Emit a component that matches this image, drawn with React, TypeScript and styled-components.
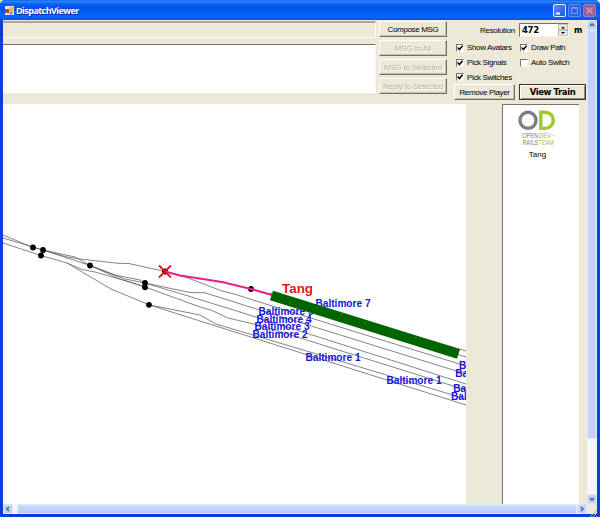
import React from "react";
import styled, { createGlobalStyle, css } from "styled-components";

const Global = createGlobalStyle`
  body { margin: 0; overflow: hidden; font-family: "Liberation Sans", Arial, sans-serif; }
  * { box-sizing: border-box; }
`;

const Window = styled.div`
  width: 600px;
  height: 517px;
  display: flex;
  flex-direction: column;
  background: #0a3fd8;
  border-radius: 5px 5px 0 0;
  overflow: hidden;
`;

const TitleBar = styled.header`
  height: 20px;
  flex: none;
  display: flex;
  align-items: center;
  padding: 1px 4px 0 5px;
  background: linear-gradient(#0a54d8 0, #2f8bff 1px, #0a62f2 4px, #0353e6 8px, #0560fa 14px, #0666ff 17px, #0351d8 20px);
`;

const Title = styled.h1`
  flex: 1;
  margin: 0 0 0 2px;
  font: bold 9px/18px "Open Sans", "Noto Sans", sans-serif;
  letter-spacing: -0.55px;
  color: #fff;
  text-shadow: 1px 1px 0 #0a2a90;
`;

const TitleButtons = styled.div`
  display: flex;
  gap: 2px;
`;

const TitleButton = styled.div<{ $kind: "min" | "max" | "close" }>`
  width: 13px;
  height: 13px;
  border-radius: 2px;
  border: 1px solid ${p => (p.$kind === "min" ? "#e4ecff" : p.$kind === "max" ? "#5f8ef0" : "#8f7fd0")};
  background: ${p => (p.$kind === "min" ? "linear-gradient(135deg,#5a90f8,#1d55e0)" : p.$kind === "max" ? "#2a62e4" : "#a0608f")};
  svg { display: block; }
`;

const Body = styled.div`
  height: 494px;
  margin: 0 3px;
  flex: none;
  display: flex;
  flex-direction: column;
  background: #ece9d8;
`;

const Main = styled.div`
  height: 484px;
  display: flex;
`;

const Form = styled.main`
  width: 584px;
  display: flex;
  flex-direction: column;
`;

const TopArea = styled.div`
  height: 84px;
  display: flex;
`;

const MessageColumn = styled.section`
  width: 373px;
  display: flex;
  flex-direction: column;
`;

const Caption = styled.div`
  height: 17px;
  margin-top: 1px;
  border-top: 2px solid #aca899;
  border-right: 1px solid #fff;
  border-bottom: 1px solid #fff;
`;

const MessageBox = styled.div`
  height: 49px;
  margin-top: 6px;
  background: #fff;
  border-top: 1px solid #77756a;
  border-right: 1px solid #f7f6f0;
`;

const ButtonColumn = styled.div`
  width: 75px;
  padding: 1px 4px 0 3px;
  display: flex;
  flex-direction: column;
  gap: 3px;
`;

const Button = styled.button<{ $strong?: boolean }>`
  display: block;
  width: 100%;
  height: 16px;
  padding: 0;
  border: 1px solid;
  border-color: #fff #716f64 #716f64 #fff;
  box-shadow: inset -1px -1px 0 #c6c2b0;
  background: #ece9d8;
  font: 8px/13px "Liberation Sans", Arial, sans-serif;
  letter-spacing: -0.35px;
  white-space: nowrap;
  color: #000;
  &:disabled {
    color: #b5b19f;
    text-shadow: 1px 1px 0 #fff;
    letter-spacing: -0.15px;
  }
  ${p => p.$strong && css`
    border-color: #333;
    box-shadow: inset 1px 1px 0 #fff, inset -1px -1px 0 #8d8a7b;
    font: bold 8.5px/13px "DejaVu Sans", sans-serif;
    letter-spacing: -0.4px;
  `}
`;

const Controls = styled.section`
  flex: 1;
  padding-left: 4px;
  display: flex;
  flex-direction: column;
`;

const ResolutionRow = styled.label`
  height: 20px;
  display: flex;
  align-items: center;
  padding-left: 25px;
  font-size: 8px;
  letter-spacing: -0.3px;
`;

const Caption2 = styled.span`
  width: 34px;
`;

const Stepper = styled.div`
  width: 50px;
  height: 14px;
  margin: 0 5px 0 5px;
  display: flex;
  justify-content: space-between;
  background: #fff;
  border: 1px solid;
  border-color: #77756a #f5f4ee #f5f4ee #77756a;
  font: bold 8.5px/13px "DejaVu Sans", sans-serif;
  padding-left: 2px;
  letter-spacing: -0.3px;
`;

const Unit = styled.span`
  font: bold 8px/13px "DejaVu Sans", sans-serif;
`;

const Checks = styled.div`
  display: grid;
  grid-template-columns: 64px 1fr;
  grid-template-rows: 15px 15px 14px;
  margin-left: 1px;
`;

const CheckLabel = styled.label`
  display: flex;
  align-items: center;
  gap: 3px;
  font-size: 8px;
  letter-spacing: -0.35px;
  white-space: nowrap;
`;

const Box = styled.span`
  width: 8px;
  height: 8px;
  background: #fff;
  border: 1px solid;
  border-color: #77756a #f5f4ee #f5f4ee #77756a;
  svg { display: block; overflow: visible; }
`;

const Actions = styled.div`
  display: grid;
  grid-template-columns: 61px 67px;
  gap: 4px;
  margin-left: -1px;
`;

const Workspace = styled.div`
  flex: 1;
  display: flex;
`;

const MapPane = styled.div`
  width: 463px;
  height: 400px;
  background: #fff;
  svg { display: block; }
`;

const Players = styled.aside`
  width: 77px;
  margin-left: 36px;
  background: #fff;
  border-top: 1px solid #77756a;
  border-left: 1px solid #77756a;
  display: flex;
  flex-direction: column;
  align-items: center;
  font-size: 8px;
  svg { display: block; margin: 3px 0 0 -8px; }
`;

const PlayerName = styled.span`
  margin: 2px 0 0 -7px;
`;

const scrollFace = css`
  background: #c3d3fb;
  border: 1px solid #dfe8ff;
  border-radius: 1px;
`;

const VScroll = styled.div`
  width: 10px;
  display: flex;
  flex-direction: column;
  background: #f5f5fa;
`;

const HScroll = styled.div`
  height: 10px;
  display: flex;
  background: #f5f5fa;
`;

const Arrow = styled.div`
  width: 10px;
  height: 10px;
  flex: none;
  ${scrollFace}
  svg { display: block; }
`;

const VThumb = styled.div`
  height: 409px;
  margin-bottom: auto;
  ${scrollFace}
`;

const HThumb = styled.div`
  flex: 1;
  margin-left: 4px;
  ${scrollFace}
  background: linear-gradient(#cbdafd, #b8cbf8);
`;

const Grip = styled.div`
  width: 10px;
  background: #ece9d8;
`;

const arrows = {
  up: "M2 5 L4 3 L6 5",
  down: "M2 3 L4 5 L6 3",
  left: "M5 2 L3 4 L5 6",
  right: "M3 2 L5 4 L3 6",
};

function ScrollArrow({ dir }: { dir: keyof typeof arrows }) {
  return (
    <Arrow>
      <svg width="8" height="8"><path d={arrows[dir]} fill="none" stroke="#4d6185" strokeWidth="1.6" /></svg>
    </Arrow>
  );
}

function Check({ children, checked = true }: { children: React.ReactNode; checked?: boolean }) {
  return (
    <CheckLabel>
      <Box>{checked && <svg width="6" height="6"><path d="M.6 2.6 L2.4 4.6 L5.6 .8" fill="none" stroke="#000" strokeWidth="1.5" /></svg>}</Box>
      {children}
    </CheckLabel>
  );
}

const tracks = [
  "3,235 33,247.5 43,250 67,257 80,259 118,263.3 129,263.5 165,271.5 188,278 222,291 234,294 272,306 466,366",
  "3,238 43,250 90,265.5 115,275 140,280 145,283 190,292.5 205,292.8 250,307 466,374",
  "3,243 41,255.5 67,263 111,289 149,304.8 200,315 216,324 330,358 466,399",
  "43,250 75,257 90,265.5 125,279 145,283 185,295 240,312 466,384",
  "67,263 82,269.5 95,272 130,282 145,287 203,308 211,310 228,318 262,326 466,390",
  "90,265.5 120,279 145,287",
  "149,304.8 200,321 466,405",
  "270,293 466,351",
  "290,303 466,357",
];

const switches = [[33, 247.5], [43, 250], [41, 255.5], [90, 265.5], [145, 283], [145, 287.3], [149, 304.8], [251, 289], [165, 271.5]];

const sidings: [string, number, number][] = [
  ["Baltimore 7", 315.5, 306.8],
  ["Baltimore 5", 258.5, 314.5],
  ["Baltimore 4", 256.5, 322.5],
  ["Baltimore 3", 254.5, 330.3],
  ["Baltimore 2", 252.5, 338.3],
  ["Baltimore 1", 305.5, 361],
  ["Baltimore 1", 386.5, 384],
  ["Baltimore 5", 459, 368.5],
  ["Baltimore 4", 455.3, 376.5],
  ["Baltimore 3", 453.3, 391.5],
  ["Baltimore 2", 451, 399.5],
];

function TrackMap() {
  return (
    <svg width="463" height="400" viewBox="3 104 463 400">
      <g fill="none" stroke="#5c5c5c" strokeWidth="0.75">
        {tracks.map(t => <polyline key={t} points={t} />)}
      </g>
      <g>{switches.map(([x, y]) => <circle key={`${x}-${y}`} cx={x} cy={y} r="2.9" />)}</g>
      <path d="M165 271.5 L180 275.5 L222 282 L251 289 L272 295" fill="none" stroke="#e6228d" strokeWidth="2.2" />
      <path d="M159 265.5 L171 277.5 M171 265.5 L159 277.5" stroke="#e01818" strokeWidth="1.9" />
      <g fill="#1414dc" fontFamily="Liberation Sans, Arial, sans-serif" fontWeight="bold" fontSize="10.4">
        {sidings.map(([name, x, y]) => (
          <text key={`${x}-${y}`} x={x} y={y} textLength="55" lengthAdjust="spacingAndGlyphs">{name}</text>
        ))}
      </g>
      <path d="M271.5 295.5 L458.5 354" stroke="#006400" strokeWidth="10" />
      <path d="M290 301.5v2 M317 307v1.5 M341 313v2 M365 322v2 M390 333v1 M415 337v1" stroke="#6a9a5a" strokeWidth=".7" />
      <text x="282" y="293" fill="#e01818" fontFamily="Liberation Sans, Arial, sans-serif" fontWeight="bold" fontSize="13" textLength="31" lengthAdjust="spacingAndGlyphs">Tang</text>
    </svg>
  );
}

function TeamLogo() {
  return (
    <svg width="40" height="40" viewBox="517 108 40 40">
      <circle cx="528" cy="120.3" r="8" fill="none" stroke="#7d7f83" strokeWidth="3.4" />
      <path d="M540.8 112.2 H545.2 A8.1 8.1 0 0 1 545.2 128.4 H540.8 Z" fill="none" stroke="#a0c828" strokeWidth="3.4" />
      <g fontFamily="Liberation Sans, Arial, sans-serif" fontSize="6.4">
        <text x="522" y="138.4" fill="#77797d" textLength="16" lengthAdjust="spacingAndGlyphs">OPEN</text>
        <text x="539" y="138.4" fill="#a0c828" textLength="12" lengthAdjust="spacingAndGlyphs">DEV</text>
        <text x="551.3" y="136" fill="#a0c828" fontSize="2.5">TM</text>
        <text x="522.5" y="144.6" fill="#77797d" textLength="15.5" lengthAdjust="spacingAndGlyphs">RAILS</text>
        <text x="538.5" y="144.6" fill="#a0c828" textLength="15.5" lengthAdjust="spacingAndGlyphs">TEAM</text>
      </g>
    </svg>
  );
}

export default function App() {
  return (
    <>
      <Global />
      <Window>
        <TitleBar>
          <svg width="9" height="9">
            <rect width="9" height="9" fill="#e8e6dc" />
            <rect x="0" y="3" width="4" height="4" fill="#c8402c" />
            <rect x="4.5" y="1" width="4" height="4" fill="#f0b820" />
            <rect x="4.5" y="5.5" width="3" height="3" fill="#6a94dc" />
          </svg>
          <Title>DispatchViewer</Title>
          <TitleButtons>
            <TitleButton $kind="min"><svg width="11" height="11"><path d="M2 8.5h4" stroke="#fff" strokeWidth="2" /></svg></TitleButton>
            <TitleButton $kind="max"><svg width="11" height="11"><path d="M2.5 2.5h6v6h-6z M2.5 3.2h6" fill="none" stroke="#7aa2f4" /></svg></TitleButton>
            <TitleButton $kind="close"><svg width="11" height="11"><path d="M2.5 2.5l6 6m0-6l-6 6" stroke="#c8a0c4" strokeWidth="1.4" /></svg></TitleButton>
          </TitleButtons>
        </TitleBar>
        <Body>
          <Main>
            <Form>
              <TopArea>
                <MessageColumn>
                  <Caption />
                  <MessageBox />
                </MessageColumn>
                <ButtonColumn>
                  <Button>Compose MSG</Button>
                  <Button disabled>MSG to All</Button>
                  <Button disabled>MSG to Selected</Button>
                  <Button disabled>Reply to Selected</Button>
                </ButtonColumn>
                <Controls>
                  <ResolutionRow>
                    <Caption2>Resolution</Caption2>
                    <Stepper>
                      472
                      <svg width="10" height="12">
                        <rect x=".5" y=".5" width="9" height="11" fill="#ece9d8" stroke="#c9c5b3" />
                        <path d="M0 6h10" stroke="#9d9a8b" />
                        <path d="M3 4.5h4L5 2.5z M3 8h4L5 10z" />
                      </svg>
                    </Stepper>
                    <Unit>m</Unit>
                  </ResolutionRow>
                  <Checks>
                    <Check>Show Avatars</Check>
                    <Check>Draw Path</Check>
                    <Check>Pick Signals</Check>
                    <Check checked={false}>Auto Switch</Check>
                    <Check>Pick Switches</Check>
                  </Checks>
                  <Actions>
                    <Button>Remove Player</Button>
                    <Button $strong>View Train</Button>
                  </Actions>
                </Controls>
              </TopArea>
              <Workspace>
                <MapPane><TrackMap /></MapPane>
                <Players>
                  <TeamLogo />
                  <PlayerName>Tang</PlayerName>
                </Players>
              </Workspace>
            </Form>
            <VScroll>
              <ScrollArrow dir="up" />
              <VThumb />
              <ScrollArrow dir="down" />
            </VScroll>
          </Main>
          <HScroll>
            <ScrollArrow dir="left" />
            <HThumb />
            <ScrollArrow dir="right" />
            <Grip>
              <svg width="10" height="10"><path d="M2 10l8-8M5 10l5-5M8 10l2-2" stroke="#aca899" /></svg>
            </Grip>
          </HScroll>
        </Body>
      </Window>
    </>
  );
}
